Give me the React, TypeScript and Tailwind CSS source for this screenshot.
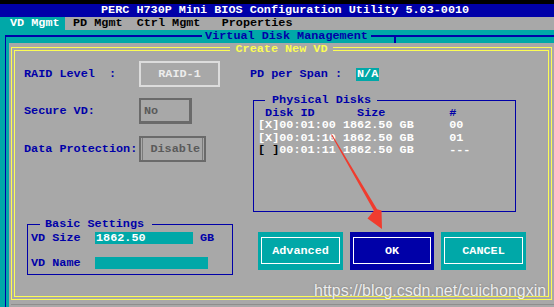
import React from 'react';

// Flat DOS-style button with an inner white frame
const DosButton: React.FC<{ label: string; active?: boolean; className?: string }> = ({ label, active, className }) => (
  <div className={`h-[38px] px-[3px] pt-[5px] pb-[6px] ${active ? 'bg-[#0000a8]' : 'bg-[#00a8a8]'} ${className ?? ''}`}>
    <div className="h-full border border-white flex items-center justify-center text-white">{label}</div>
  </div>
);

export default function App() {
  return (
    <div className="relative w-[554px] h-[307px] overflow-hidden bg-black flex flex-col font-['Liberation_Mono','DejaVu_Sans_Mono',monospace] font-bold text-[11.8px] leading-[12px]">
      {/* top black strip */}
      <div className="h-[4px] shrink-0 bg-black" />

      {/* title bar */}
      <div className="h-[13px] shrink-0 bg-[#0000a8] text-white leading-[13px] whitespace-pre pl-[101px]">
        PERC H730P Mini BIOS Configuration Utility 5.03-0010
      </div>

      {/* tabs */}
      <div className="h-[13px] shrink-0 bg-[#a8a8a8] flex leading-[13px] whitespace-pre">
        <div className="w-[65px] pl-[10px] bg-[#00a8a8] text-white">VD Mgmt</div>
        <div className="ml-[8px] text-black">{'PD Mgmt  Ctrl Mgmt   Properties'}</div>
      </div>

      {/* teal window */}
      <div className="flex-1 bg-[#00a8a8] pl-[5px]">
        <fieldset className="w-[562px] shrink-0 border-l border-t-2 border-[#0000a8]">
          <legend className="mx-auto px-[3px] text-[#0000a8] leading-[12px]">Virtual Disk Management</legend>
          <div className="pl-[3px] pt-[1px]">
            <div className="w-[546px] h-[264px] bg-[#a8a8a8] pl-[2px] flex flex-col">
              <fieldset className="w-[541px] h-[257px] shrink-0 border-[4px] border-double border-[#fcfc54]">
                <legend className="mx-auto px-[5px] text-[#fcfc54] leading-[12px]">Create New VD</legend>
                <div className="flex">
                  {/* left column */}
                  <div className="w-[235px] pl-[9px] flex flex-col text-[#0000a8]">
                    <div className="mt-[6px] flex items-center h-[26px] whitespace-pre">
                      <div className="w-[115px]">{'RAID Level  :'}</div>
                      <div className="w-[81px] h-[26px] border-2 border-[#dcdcdc] flex items-center justify-center text-[#ececec]">RAID-1</div>
                    </div>
                    <div className="mt-[11px] flex items-center h-[26px]">
                      <div className="w-[115px]">Secure VD:</div>
                      <div className="w-[53px] h-[26px] border-l-2 border-t-2 border-r-[3px] border-b-[3px] border-[#6a6a6a] flex items-center pl-[3px] text-[#5a5a5a]">No</div>
                    </div>
                    <div className="mt-[12px] flex items-center h-[26px]">
                      <div className="w-[115px]">Data Protection:</div>
                      <div className="w-[67px] h-[26px] border-2 border-[#6a6a6a] flex items-stretch">
                        <div className="ml-[1px] mr-[1px] flex-1 border-l border-r border-[#7a7a7a] flex items-center justify-end pr-[2px] text-[#5a5a5a]">Disable</div>
                      </div>
                    </div>

                    <fieldset className="mt-[56px] ml-[3px] w-[206px] border border-[#0000a8] pb-[5px]">
                      <legend className="ml-[12px] pl-[5px] pr-[8px] leading-[12px]">Basic Settings</legend>
                      <div className="pl-[3px] mt-[2px] flex items-center h-[12px]">
                        <div className="w-[64px]">VD Size</div>
                        <div className="w-[98px] h-[12px] bg-[#00a8a8] text-white pl-[1px]">1862.50</div>
                        <div className="ml-[7px]">GB</div>
                      </div>
                      <div className="pl-[3px] mt-[13px] flex items-center h-[12px]">
                        <div className="w-[64px]">VD Name</div>
                        <div className="w-[113px] h-[12px] bg-[#00a8a8]" />
                      </div>
                    </fieldset>
                  </div>

                  {/* right column */}
                  <div className="flex-1 flex flex-col">
                    <div className="mt-[13px] flex items-center h-[12px] whitespace-pre text-[#0000a8]">
                      <div className="w-[106px]">{'PD per Span :'}</div>
                      <div className="h-[13px] px-[1px] bg-[#00a8a8] text-white flex items-center">N/A</div>
                    </div>

                    <fieldset className="mt-[14px] ml-[3px] w-[263px] h-[118px] border border-[#0000a8]">
                      <legend className="ml-[11px] pl-[7px] pr-[6px] text-[#0000a8] leading-[12px]">Physical Disks</legend>
                      <div className="pl-[4px] pt-[1px] whitespace-pre leading-[12.4px] text-white">
                        <div className="text-[#0000a8]">{' Disk ID      Size         #'}</div>
                        <div>{'[X]00:01:00 1862.50 GB     00'}</div>
                        <div>{'[X]00:01:10 1862.50 GB     01'}</div>
                        <div>
                          <span className="text-black">[ ]</span>
                          {'00:01:11 1862.50 GB     ---'}
                        </div>
                      </div>
                    </fieldset>

                    <div className="mt-[20px] ml-[8px] flex gap-[7px]">
                      <DosButton label="Advanced" className="w-[85px]" />
                      <DosButton label="OK" active className="w-[84px]" />
                      <DosButton label="CANCEL" className="w-[85px]" />
                    </div>
                  </div>
                </div>
              </fieldset>
              <div className="mt-[4px] h-[1px] bg-[#8e8e8e]" />
            </div>
          </div>
        </fieldset>
      </div>

      {/* small frame tick under the header line */}
      <div className="absolute left-[394px] top-[36px] w-[2px] h-[7px] bg-[#0000a8]" />

      {/* red annotation arrow */}
      <svg className="absolute inset-0 pointer-events-none" width="554" height="307" viewBox="0 0 554 307">
        <polygon
          fill="#f03c2e"
          points="331.9,134.3 377.1,209.2 381.5,210.5 382,229 367.5,218.5 373.9,210.8 331.1,134.7"
        />
      </svg>

      {/* blog watermark */}
      <div className="absolute left-[314px] top-[281px] font-['Liberation_Sans',Arial,sans-serif] font-normal text-[16px] leading-[20px] text-[#eeeeee] [text-shadow:0_0_2px_rgba(80,80,80,0.6)]">
        https://blog.csdn.net/cuichongxin
      </div>
    </div>
  );
}
